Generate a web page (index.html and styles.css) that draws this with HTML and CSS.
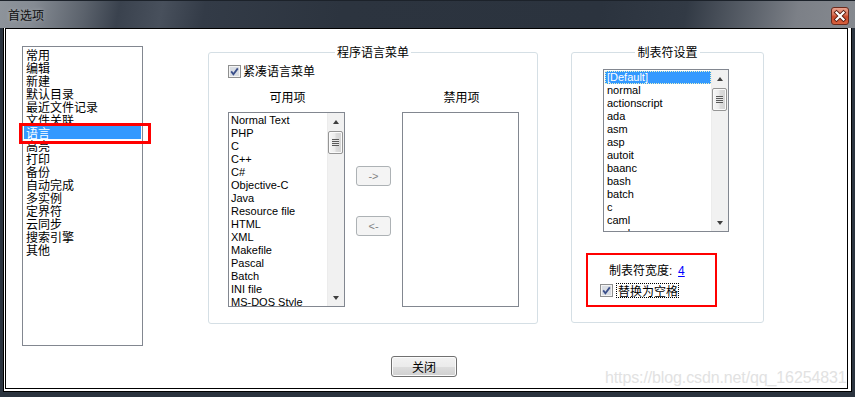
FILE: index.html
```html
<!DOCTYPE html>
<html lang="zh-CN">
<head>
<meta charset="utf-8">
<title>首选项</title>
<link rel="stylesheet" href="styles.css">
</head>
<body>
<div class="window">
  <div class="titlebar">
    <span class="title">首选项</span>
    <span class="close-x">
      <svg width="18" height="18" viewBox="0 0 18 18">
        <path d="M5.5 5.5 L12.5 12.5 M12.5 5.5 L5.5 12.5" stroke="#5a1e12" stroke-width="4" stroke-linecap="square" fill="none"/>
        <path d="M5.5 5.5 L12.5 12.5 M12.5 5.5 L5.5 12.5" stroke="#ffffff" stroke-width="2.2" stroke-linecap="square" fill="none"/>
      </svg>
    </span>
  </div>
  <div class="client">
    <div class="client-inner">
      <div class="main-row">
        <div class="cat-wrap">
          <ul class="listbox cat-list">
            <li>常用</li>
            <li>编辑</li>
            <li>新建</li>
            <li>默认目录</li>
            <li>最近文件记录</li>
            <li>文件关联</li>
            <li class="sel">语言</li>
            <li>高亮</li>
            <li>打印</li>
            <li>备份</li>
            <li>自动完成</li>
            <li>多实例</li>
            <li>定界符</li>
            <li>云同步</li>
            <li>搜索引擎</li>
            <li>其他</li>
          </ul>
          <div class="annot-lang"></div>
        </div>

        <fieldset class="group group-lang">
          <legend>程序语言菜单</legend>
          <div class="check-row check-row-lang">
            <svg class="cb" width="13" height="13" viewBox="0 0 13 13">
              <rect x="0.5" y="0.5" width="12" height="12" fill="#f4f4f4" stroke="#8e8f8f"/>
              <rect x="2" y="2" width="9" height="9" fill="#d9dde3"/>
              <path d="M3.2 6.4 L5.4 9.2 L9.8 3.4" fill="none" stroke="#3a4f8a" stroke-width="1.8"/>
            </svg>
            <span>紧凑语言菜单</span>
          </div>
          <div class="lang-cols">
            <div class="col">
              <div class="col-label">可用项</div>
              <div class="listbox lang-list">
                <ul class="items">
                  <li>Normal Text</li>
                  <li>PHP</li>
                  <li>C</li>
                  <li>C++</li>
                  <li>C#</li>
                  <li>Objective-C</li>
                  <li>Java</li>
                  <li>Resource file</li>
                  <li>HTML</li>
                  <li>XML</li>
                  <li>Makefile</li>
                  <li>Pascal</li>
                  <li>Batch</li>
                  <li>INI file</li>
                  <li>MS-DOS Style</li>
                  <li>ASP</li>
                </ul>
                <div class="scrollbar">
                  <div class="sb-btn"><span class="arr-up"></span></div>
                  <div class="sb-track"><div class="sb-thumb"></div></div>
                  <div class="sb-btn"><span class="arr-down"></span></div>
                </div>
              </div>
            </div>
            <div class="move-btns">
              <button class="btn-dis">-&gt;</button>
              <button class="btn-dis">&lt;-</button>
            </div>
            <div class="col">
              <div class="col-label">禁用项</div>
              <div class="listbox dis-list"></div>
            </div>
          </div>
        </fieldset>

        <fieldset class="group group-tab">
          <legend>制表符设置</legend>
          <div class="listbox tab-list">
            <ul class="items">
              <li class="sel">[Default]</li>
              <li>normal</li>
              <li>actionscript</li>
              <li>ada</li>
              <li>asm</li>
              <li>asp</li>
              <li>autoit</li>
              <li>baanc</li>
              <li>bash</li>
              <li>batch</li>
              <li>c</li>
              <li>caml</li>
              <li>cmake</li>
              <li>cobol</li>
            </ul>
            <div class="scrollbar">
              <div class="sb-btn"><span class="arr-up"></span></div>
              <div class="sb-track"><div class="sb-thumb"></div></div>
              <div class="sb-btn"><span class="arr-down"></span></div>
            </div>
          </div>
          <div class="annot-box">
            <div class="tab-width">制表符宽度<span class="colon">:</span> <a class="link">4</a></div>
            <div class="check-row check-row-tab">
              <svg class="cb" width="13" height="13" viewBox="0 0 13 13">
                <rect x="0.5" y="0.5" width="12" height="12" fill="#f4f4f4" stroke="#8e8f8f"/>
                <rect x="2" y="2" width="9" height="9" fill="#d9dde3"/>
                <path d="M3.2 6.4 L5.4 9.2 L9.8 3.4" fill="none" stroke="#3a4f8a" stroke-width="1.8"/>
              </svg>
              <span class="focus-text">替换为空格</span>
            </div>
          </div>
        </fieldset>
      </div>
      <div class="bottom-row">
        <button class="btn-close">关闭</button>
      </div>
    </div>
  </div>
  <div class="watermark">https://blog.csdn.net/qq_16254831</div>
</div>
</body>
</html>
```
FILE: styles.css
```css
* { box-sizing: border-box; }
html, body { margin: 0; padding: 0; }
body {
  width: 855px;
  height: 397px;
  overflow: hidden;
  background: #2b343f;
  font-family: "Noto Sans CJK SC", sans-serif;
  font-size: 12px;
  color: #000;
}
ul { list-style: none; margin: 0; padding: 0; }

.window {
  position: relative;
  width: 855px;
  height: 397px;
  background: #2b343f;
}

/* title bar */
.titlebar {
  height: 28px;
  display: flex;
  justify-content: space-between;
  align-items: flex-start;
  padding: 0 6px 0 8px;
  background: linear-gradient(100deg, #8e949b 0%, #858b93 4%, #5b626c 10%, #3a424e 14%, #48505c 19%, #333b47 24%, #2c343f 40%, #2b333e 70%, #323a45 80%, #5e646d 88%, #7c8087 93%, #868a90 100%);
  box-shadow: inset 0 1px 0 #1c222a;
}
.title {
  margin-top: 8px;
  line-height: 14px;
  font-size: 12px;
  color: #101010;
  text-shadow: 0 0 4px rgba(255,255,255,0.35);
}
.close-x {
  margin-top: 7px;
  width: 18px;
  height: 18px;
  border: 1px solid #6b2a1c;
  border-radius: 3px;
  background: linear-gradient(#eaa28e 0%, #d9765c 40%, #c9482a 55%, #d8623f 100%);
  display: flex;
  align-items: center;
  justify-content: center;
  overflow: hidden;
}
.close-x svg { display: block; margin: -1px; }

/* client area */
.client {
  margin: 0 3px 5px 3px;
  border: 1px solid #000;
  border-top: 0;
  padding: 0 3px 2px 1px;
  background: #fff;
}
.client-inner {
  border: 1px solid #000;
  height: 361px;
  background: #fff;
}

.main-row {
  display: flex;
  align-items: flex-start;
  padding-left: 16px;
}

.listbox {
  border: 1px solid #828790;
  background: #fff;
}

/* category list */
.cat-wrap {
  position: relative;
  margin-top: 17px;
}
.cat-list {
  width: 121px;
  height: 300px;
  padding: 1px 1px;
  overflow: hidden;
}
.cat-list li {
  line-height: 13px;
  height: 13px;
  padding-left: 2px;
  font-size: 12px;
  white-space: nowrap;
}
.cat-list li.sel {
  background: #3399ff;
  color: #fff;
}
.annot-lang {
  position: absolute;
  left: -3px;
  top: 77px;
  width: 132px;
  height: 21px;
  border: 3px solid #ff0000;
}

/* group boxes */
.group {
  margin: 16px 0 0 0;
  min-width: 0;
  border: 1px solid #d5dfe5;
  border-radius: 3px;
}
.group legend {
  margin: 0 auto;
  padding: 0 2px;
  font-size: 12px;
  line-height: 14px;
}
.group-lang {
  margin-left: 65px;
  width: 330px;
  padding: 5px 0 16px 0;
}
.group-tab {
  margin-left: 33px;
  width: 193px;
  padding: 10px 0 15px 0;
}

.check-row {
  display: flex;
  align-items: center;
  gap: 2px;
  height: 14px;
  line-height: 14px;
}
.check-row-lang { margin-left: 19px; }
.cb { display: block; flex: none; }

.lang-cols {
  display: flex;
  align-items: flex-start;
  gap: 11px;
  margin: 12px 0 0 19px;
}
.col { width: 117px; }
.col-label {
  text-align: center;
  line-height: 14px;
  padding-left: 2px;
}
.lang-list, .dis-list {
  margin-top: 8px;
  width: 117px;
  height: 195px;
}
.lang-list, .tab-list {
  display: flex;
  overflow: hidden;
}
.items {
  flex: 1;
  min-width: 0;
  overflow: hidden;
  padding: 1px 0 0 1px;
  font-family: "Liberation Sans", Arial, sans-serif;
  font-size: 11px;
}
.items li {
  height: 13px;
  line-height: 13px;
  padding-left: 1px;
  white-space: nowrap;
}
.tab-list .items li { padding-left: 2px; }
.tab-list .items li.sel {
  background: #3399ff;
  color: #fff;
  outline: 1px dotted rgba(255, 255, 190, 0.9);
  outline-offset: -1px;
}

/* scrollbar */
.scrollbar {
  width: 17px;
  flex: none;
  display: flex;
  flex-direction: column;
  background: #f1f1f1;
  border-left: 1px solid #ececec;
}
.sb-btn {
  height: 17px;
  display: flex;
  align-items: center;
  justify-content: center;
}
.arr-up, .arr-down {
  width: 0;
  height: 0;
  border-left: 3.5px solid transparent;
  border-right: 3.5px solid transparent;
}
.arr-up { border-bottom: 4px solid #3f3f3f; }
.arr-down { border-top: 4px solid #3f3f3f; }
.sb-track { flex: 1; padding: 1px 0 0 0; }
.sb-thumb {
  position: relative;
  width: 15px;
  height: 23px;
  border: 1px solid #959595;
  border-radius: 2px;
  background: linear-gradient(to right, #f7f7f7, #ececec 45%, #dcdcdc 55%, #d3d3d3);
  box-shadow: inset 0 0 0 1px #fafafa;
}
.sb-thumb::after {
  content: "";
  position: absolute;
  left: 3px;
  top: 7px;
  width: 7px;
  height: 7px;
  background: repeating-linear-gradient(to bottom, #5a5a5a 0 1px, #e8e8e8 1px 2px);
}

/* move buttons */
.move-btns {
  width: 35px;
  display: flex;
  flex-direction: column;
  gap: 30px;
  margin-top: 76px;
}
.btn-dis {
  width: 35px;
  height: 20px;
  margin: 0;
  padding: 0;
  border: 1px solid #adb2b5;
  border-radius: 3px;
  background: #f4f4f4;
  color: #838383;
  font-family: "Liberation Sans", Arial, sans-serif;
  font-size: 11px;
  line-height: 18px;
}

/* tab settings */
.tab-list {
  margin-left: 31px;
  width: 126px;
  height: 163px;
}
.annot-box {
  margin: 21px 0 0 14px;
  width: 131px;
  height: 54px;
  border: 2px solid #ff0000;
  padding: 8px 0 0 0;
}
.tab-width {
  padding-left: 21px;
  line-height: 14px;
  white-space: nowrap;
}
.colon { font-family: "Liberation Sans", Arial, sans-serif; color: #400000; }
.link {
  color: #0000ff;
  text-decoration: underline;
  font-family: "Liberation Sans", Arial, sans-serif;
  font-size: 12px;
  margin-left: 3px;
}
.check-row-tab {
  margin-top: 5px;
  margin-left: 12px;
  height: 15px;
  gap: 3px;
}
.focus-text {
  border: 1px dotted #000;
  line-height: 13px;
  padding: 0 0 0 1px;
}

/* bottom */
.bottom-row {
  margin-top: 10px;
  padding-left: 385px;
}
.btn-close {
  width: 66px;
  height: 21px;
  margin: 0;
  padding: 0;
  border: 1px solid #707070;
  border-radius: 3px;
  background: linear-gradient(#f2f2f2 0%, #ebebeb 50%, #dddddd 51%, #cfcfcf 100%);
  box-shadow: inset 0 0 0 1px #fbfbfb;
  font-family: "Noto Sans CJK SC", sans-serif;
  font-size: 12px;
  line-height: 17px;
  color: #000;
}

.watermark {
  position: absolute;
  left: 605px;
  top: 369px;
  font-family: "Liberation Sans", Arial, sans-serif;
  font-size: 16px;
  line-height: 18px;
  letter-spacing: -0.12px;
  color: #e2e2e2;
  white-space: nowrap;
}
```
